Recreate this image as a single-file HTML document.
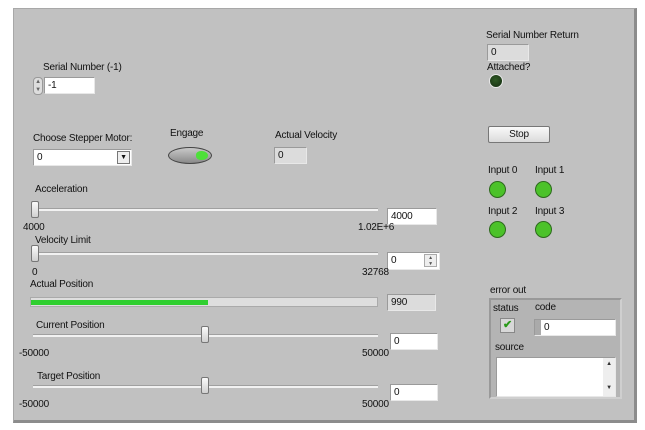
<!DOCTYPE html>
<html><head><meta charset="utf-8"><style>
*{box-sizing:border-box;margin:0;padding:0}
body{width:645px;height:430px;background:#fff;position:relative;overflow:hidden;font-family:"Liberation Sans",sans-serif;font-size:10px;letter-spacing:-0.2px;color:#111}
.a{position:absolute;white-space:nowrap}
#panel{position:absolute;left:13px;top:8px;width:624px;height:415px;background:#c1c1c1;border:1px solid #a8a8a8;border-right:3px solid #8c8c8c;border-bottom:3px solid #8c8c8c}
.box{position:absolute;background:#fff;border:1px solid #9a9a9a;border-right-color:#e8e8e8;border-bottom-color:#e8e8e8;padding:2px 0 0 3px}
.ind{background:#dcdcdc}
.track{position:absolute;height:3px;background:#f2f2f2;border-top:1px solid #a0a0a0}
.thumb{position:absolute;width:8px;height:17px;background:linear-gradient(#fafafa,#d0d0d0);border:1px solid #777;border-radius:2px}
.led{position:absolute;width:17px;height:17px;border-radius:50%;background:#4cc22a;border:1px solid #2d6a1d}
</style></head><body>
<div id="panel"></div>

<div class="a" style="left:43px;top:62px">Serial Number (-1)</div>
<div class="a" style="left:33px;top:77px;width:10px;height:18px;border:1px solid #999;border-radius:4px;background:#ddd;font-size:6px;line-height:8px;text-align:center;color:#666">▲<br>▼</div>
<div class="box" style="left:44px;top:77px;width:51px;height:17px">-1</div>

<div class="a" style="left:33px;top:133px">Choose Stepper Motor:</div>
<div class="box" style="left:33px;top:149px;width:99px;height:17px">0</div>
<div class="a" style="left:117px;top:151px;width:13px;height:13px;border:1px solid #777;background:#eee;font-size:7px;text-align:center;line-height:12px">▼</div>

<div class="a" style="left:170px;top:128px">Engage</div>
<div class="a" style="left:168px;top:147px;width:44px;height:17px;border-radius:50%;background:linear-gradient(#c8c8c8,#8a8a8a);border:1px solid #444"></div>
<div class="a" style="left:196px;top:151px;width:12px;height:9px;background:#4ee03a;border-radius:50% 60% 60% 50%"></div>

<div class="a" style="left:275px;top:130px">Actual Velocity</div>
<div class="box ind" style="left:274px;top:147px;width:33px;height:17px">0</div>

<div class="a" style="left:486px;top:30px">Serial Number Return</div>
<div class="box ind" style="left:487px;top:44px;width:42px;height:17px">0</div>
<div class="a" style="left:487px;top:62px">Attached?</div>
<div class="a" style="left:489px;top:74px;width:14px;height:14px;border-radius:50%;background:radial-gradient(circle at 45% 40%,#2f5a25,#132a10);border:1px solid #e8e8e8"></div>

<div class="a" style="left:488px;top:126px;width:62px;height:17px;border:1px solid #777;border-radius:2px;background:linear-gradient(#fafafa,#dadada);text-align:center;line-height:15px">Stop</div>

<div class="a" style="left:488px;top:165px">Input 0</div>
<div class="a" style="left:535px;top:165px">Input 1</div>
<div class="led" style="left:489px;top:181px"></div>
<div class="led" style="left:535px;top:181px"></div>
<div class="a" style="left:488px;top:206px">Input 2</div>
<div class="a" style="left:535px;top:206px">Input 3</div>
<div class="led" style="left:489px;top:221px"></div>
<div class="led" style="left:535px;top:221px"></div>

<div class="a" style="left:35px;top:184px">Acceleration</div>
<div class="track" style="left:33px;top:208px;width:345px"></div>
<div class="thumb" style="left:31px;top:201px"></div>
<div class="box" style="left:387px;top:208px;width:50px;height:17px">4000</div>
<div class="a" style="left:23px;top:222px">4000</div>
<div class="a" style="left:358px;top:222px">1.02E+6</div>

<div class="a" style="left:35px;top:235px">Velocity Limit</div>
<div class="track" style="left:33px;top:252px;width:345px"></div>
<div class="thumb" style="left:31px;top:245px"></div>
<div class="box" style="left:387px;top:252px;width:53px;height:18px">0</div>
<div class="a" style="left:424px;top:254px;width:13px;height:13px;border:1px solid #aaa;background:#eee;font-size:5px;line-height:6px;text-align:center;color:#555">▲<br>▼</div>
<div class="a" style="left:32px;top:267px">0</div>
<div class="a" style="left:362px;top:267px">32768</div>

<div class="a" style="left:30px;top:279px">Actual Position</div>
<div class="a" style="left:30px;top:297px;width:348px;height:10px;background:#dedede;border:1px solid #aaa"></div>
<div class="a" style="left:31px;top:300px;width:177px;height:5px;background:#2fcf2f"></div>
<div class="box ind" style="left:387px;top:294px;width:49px;height:17px">990</div>

<div class="a" style="left:36px;top:320px">Current Position</div>
<div class="track" style="left:33px;top:334px;width:345px"></div>
<div class="thumb" style="left:201px;top:326px"></div>
<div class="box" style="left:390px;top:333px;width:48px;height:17px">0</div>
<div class="a" style="left:19px;top:348px">-50000</div>
<div class="a" style="left:362px;top:348px">50000</div>

<div class="a" style="left:37px;top:371px">Target Position</div>
<div class="track" style="left:33px;top:385px;width:345px"></div>
<div class="thumb" style="left:201px;top:377px"></div>
<div class="box" style="left:390px;top:384px;width:48px;height:17px">0</div>
<div class="a" style="left:19px;top:399px">-50000</div>
<div class="a" style="left:362px;top:399px">50000</div>

<div class="a" style="left:490px;top:285px">error out</div>
<div class="a" style="left:489px;top:298px;width:133px;height:101px;background:#b4b4b4;border:2px solid #cfcfcf;border-top-color:#999;border-left-color:#999"></div>
<div class="a" style="left:493px;top:303px">status</div>
<div class="a" style="left:535px;top:302px">code</div>
<div class="a" style="left:500px;top:318px;width:15px;height:15px;background:#d8d8d8;border:1px solid #888;color:#2a9a1a;font-size:11px;text-align:center;line-height:13px;font-weight:bold">✔</div>
<div class="box" style="left:534px;top:319px;width:82px;height:17px;padding-left:9px">0</div>
<div class="a" style="left:535px;top:320px;width:6px;height:15px;background:#aaa"></div>
<div class="a" style="left:495px;top:342px">source</div>
<div class="box" style="left:496px;top:357px;width:120px;height:40px"></div>
<div class="a" style="left:603px;top:358px;width:12px;height:38px;background:#eee;font-size:6px;color:#333;text-align:center;line-height:8px;padding-top:2px">▲<br><br><br>▼</div>
</body></html>
